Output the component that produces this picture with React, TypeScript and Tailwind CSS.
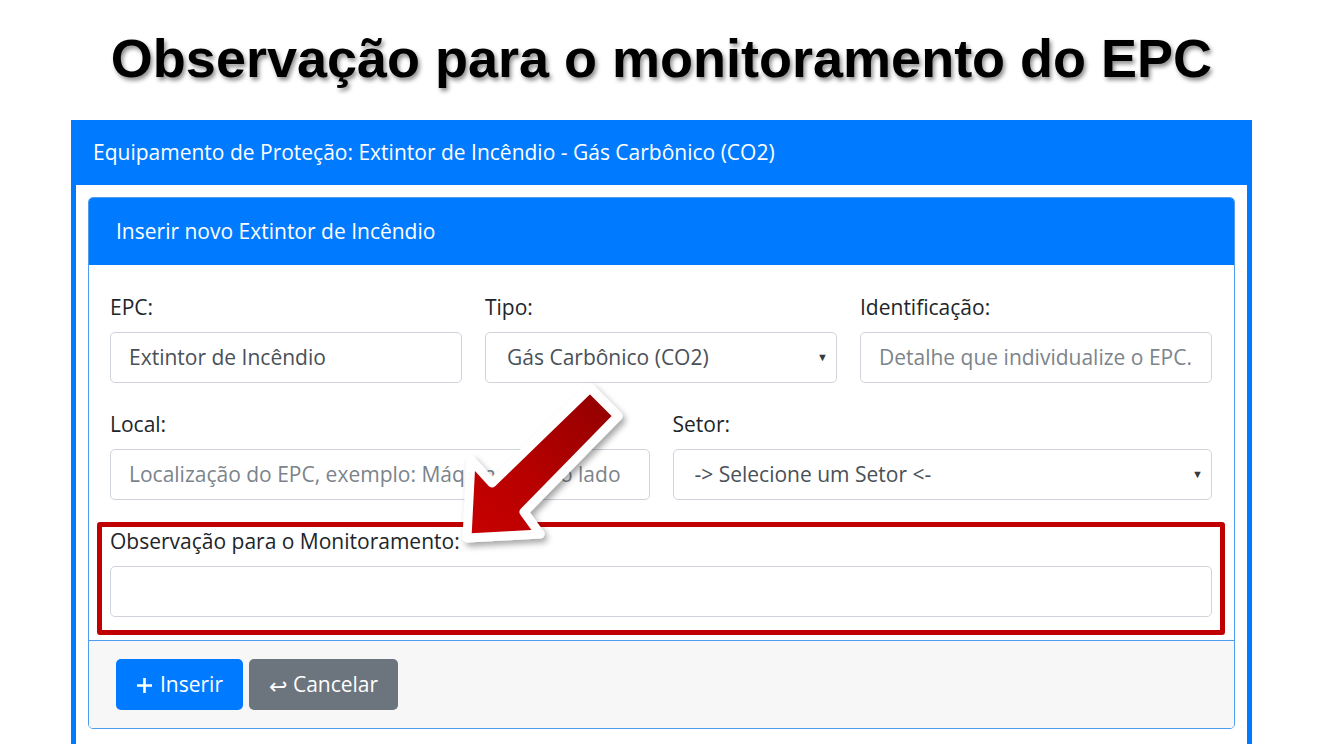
import React from 'react';

const ui = "font-['Open_Sans','Noto_Sans',sans-serif]";

function Field({ label, children }: { label: string; children: React.ReactNode }) {
  return (
    <div className="flex flex-col">
      <label className="h-[30px] mb-[10px] text-[21px] leading-[30px] text-[#212529] whitespace-nowrap">{label}</label>
      {children}
    </div>
  );
}

function Input({ value, placeholder }: { value?: string; placeholder?: string }) {
  return (
    <div className="h-[51px] rounded-[5px] border border-[#ced4da] bg-white px-[18px] flex items-center text-[21px] whitespace-nowrap overflow-hidden">
      {value ? (
        <span className="text-[#495057]">{value}</span>
      ) : (
        <span className="text-[#7c848b]">{placeholder}</span>
      )}
    </div>
  );
}

function Select({ value }: { value: string }) {
  return (
    <div className="h-[51px] rounded-[5px] border border-[#ced4da] bg-white pl-[21px] pr-[8px] flex items-center justify-between text-[21px] whitespace-nowrap">
      <span className="text-[#495057]">{value}</span>
      <span className="text-[11px] text-[#343a40]">▼</span>
    </div>
  );
}

export default function App() {
  return (
    <div className={`relative h-[744px] w-[1323px] overflow-hidden bg-white flex flex-col ${ui}`}>
      {/* Slide title */}
      <h1 className="h-[120px] pt-[22px] text-center font-['Liberation_Sans',Arial,sans-serif] font-bold text-[54px] leading-[72px] text-black [text-shadow:2px_3px_4px_rgba(0,0,0,0.45)]">
        Observação para o monitoramento do EPC
      </h1>

      {/* Screenshot frame */}
      <div className="mx-[71px] flex-1 flex flex-col bg-[#007bff] px-[5px]">
        <div className="h-[65px] flex items-center pl-[17px] text-white text-[21px] whitespace-nowrap">
          Equipamento de Proteção: Extintor de Incêndio - Gás Carbônico (CO2)
        </div>
        <div className="flex-1 bg-white px-[12px] pt-[12px]">
          <div className="rounded-[5px] border border-[#4d9cf0] overflow-hidden">
            <div className="h-[67px] bg-[#007bff] flex items-center pl-[27px] text-white text-[21px]">
              Inserir novo Extintor de Incêndio
            </div>
            <div className="pl-[21px] pr-[22px] pt-[27px] pb-[23px] flex flex-col gap-[26px]">
              <div className="grid grid-cols-3 gap-[23px]">
                <Field label="EPC:">
                  <Input value="Extintor de Incêndio" />
                </Field>
                <Field label="Tipo:">
                  <Select value="Gás Carbônico (CO2)" />
                </Field>
                <Field label="Identificação:">
                  <Input placeholder="Detalhe que individualize o EPC." />
                </Field>
              </div>
              <div className="grid grid-cols-2 gap-[23px]">
                <Field label="Local:">
                  <Input placeholder="Localização do EPC, exemplo: Máquina tal, ao lado" />
                </Field>
                <Field label="Setor:">
                  <Select value="-> Selecione um Setor <-" />
                </Field>
              </div>
              <div className="relative">
                <Field label="Observação para o Monitoramento:">
                  <Input />
                </Field>
                <div className="absolute -left-[13px] -right-[13px] -top-[4px] -bottom-[18px] border-[5px] border-[#c00000] rounded-[3px]" />
              </div>
            </div>
            <div className="h-[88px] border-t border-[#4d9cf0] bg-[#f7f7f7] px-[27px] flex items-center gap-[6px]">
              <button className="h-[51px] w-[127px] rounded-[5px] bg-[#007bff] text-white text-[21px] flex items-center justify-center gap-[7px]">
                <svg width="17" height="17" viewBox="0 0 17 17" className="mt-[2px]">
                  <path d="M8.5 1v15M1 8.5h15" stroke="#fff" strokeWidth="2.6" />
                </svg>
                <span>Inserir</span>
              </button>
              <button className="h-[51px] w-[149px] rounded-[5px] bg-[#6c757d] text-white text-[21px] flex items-center justify-center gap-[6px]">
                <span className="text-[22px] leading-none">↩</span>
                <span>Cancelar</span>
              </button>
            </div>
          </div>
        </div>
      </div>

      {/* Annotation arrow */}
      <svg className="absolute left-0 top-0 pointer-events-none" width="1323" height="744" viewBox="0 0 1323 744">
        <defs>
          <linearGradient id="arrowFill" x1="620" y1="390" x2="470" y2="540" gradientUnits="userSpaceOnUse">
            <stop offset="0" stopColor="#8e0000" />
            <stop offset="0.6" stopColor="#b80000" />
            <stop offset="1" stopColor="#c80000" />
          </linearGradient>
          <filter id="arrowShadow" x="-20%" y="-20%" width="140%" height="140%">
            <feDropShadow dx="3" dy="4" stdDeviation="3" floodColor="#000" floodOpacity="0.35" />
          </filter>
        </defs>
        <polygon
          points="590,388 618,416 524,512 540,534 467,538 471,460 492,483"
          fill="url(#arrowFill)"
          stroke="#fff"
          strokeWidth="9"
          strokeLinejoin="round"
          filter="url(#arrowShadow)"
        />
      </svg>
    </div>
  );
}
